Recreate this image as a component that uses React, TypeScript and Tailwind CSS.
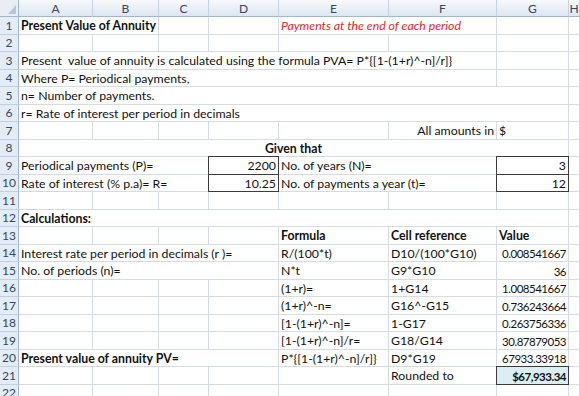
import React from "react";

type Cell = {
  span?: number;
  text?: string;
  align?: "left" | "right" | "center";
  bold?: boolean;
  red?: boolean;
  box?: boolean;
  fill?: boolean;
  num?: boolean;
};

const GRID = "grid grid-cols-[19px_74px_66px_50px_70px_110px_108px_72px_1fr]";
const LETTERS = ["A", "B", "C", "D", "E", "F", "G", "H"];

const e = (): Cell => ({});
const t = (text: string, extra: Partial<Cell> = {}): Cell => ({ text, ...extra });
const n = (text: string): Cell => ({ text, align: "right", num: true });

// every row lists columns A..G; H is added empty
const rows: Cell[][] = [
  [t("Present Value of Annuity", { span: 2, bold: true }), e(), e(), t("Payments at the end of each period", { span: 2, red: true }), e()],
  [e(), e(), e(), e(), e(), e(), e()],
  [t("Present  value of annuity is calculated using the formula PVA= P*{[1-(1+r)^-n]/r]}", { span: 6 }), e()],
  [t("Where P= Periodical payments,", { span: 6 }), e()],
  [t("n= Number of payments.", { span: 7 })],
  [t("r= Rate of interest per period in decimals", { span: 7 })],
  [e(), e(), e(), e(), e(), t("All amounts in", { align: "right" }), t("$")],
  [t("Given that", { span: 7, bold: true, align: "center" })],
  [t("Periodical payments (P)=", { span: 3 }), t("2200", { align: "right", box: true }), t("No. of years (N)=", { span: 2 }), t("3", { align: "right", box: true })],
  [t("Rate of interest (% p.a)= R=", { span: 3 }), t("10.25", { align: "right", box: true }), t("No. of payments a year (t)=", { span: 2 }), t("12", { align: "right", box: true })],
  [e(), e(), e(), e(), e(), e(), e()],
  [t("Calculations:", { span: 7, bold: true })],
  [e(), e(), e(), e(), t("Formula", { bold: true }), t("Cell reference", { bold: true }), t("Value", { bold: true })],
  [t("Interest rate per period in decimals (r )=", { span: 4 }), t("R/(100*t)"), t("D10/(100*G10)"), n("0.008541667")],
  [t("No. of periods (n)=", { span: 4 }), t("N*t"), t("G9*G10"), n("36")],
  [e(), e(), e(), e(), t("(1+r)="), t("1+G14"), n("1.008541667")],
  [e(), e(), e(), e(), t("(1+r)^-n="), t("G16^-G15"), n("0.736243664")],
  [e(), e(), e(), e(), t("[1-(1+r)^-n]="), t("1-G17"), n("0.263756336")],
  [e(), e(), e(), e(), t("[1-(1+r)^-n]/r="), t("G18/G14"), n("30.87879053")],
  [t("Present value of annuity PV=", { span: 4, bold: true }), t("P*{[1-(1+r)^-n]/r]}"), t("D9*G19"), n("67933.33918")],
  [e(), e(), e(), e(), e(), t("Rounded to"), t("$67,933.34", { align: "right", bold: true, box: true, fill: true, num: true })],
  [e(), e(), e(), e(), e(), e(), e()],
];

const spanClass: Record<number, string> = {
  1: "col-span-1",
  2: "col-span-2",
  3: "col-span-3",
  4: "col-span-4",
  5: "col-span-5",
  6: "col-span-6",
  7: "col-span-7",
};

function SheetCell({ cell }: { cell: Cell }) {
  const align =
    cell.align === "right" ? "justify-end" : cell.align === "center" ? "justify-center" : "justify-start";
  return (
    <div
      className={[
        spanClass[cell.span ?? 1],
        "flex items-center overflow-hidden whitespace-pre px-[2px] pt-[2px] border-r border-b",
        align,
        cell.box
          ? "border-[#3c3c3c] shadow-[-1px_0_0_#3c3c3c,0_-1px_0_#3c3c3c,-1px_-1px_0_#3c3c3c]"
          : "border-[#d5dae3]",
        cell.fill ? "bg-[#dbeef4]" : "",
        cell.bold ? "font-bold" : "",
        cell.num ? "text-[11.5px] tracking-[-0.5px]" : "",
        cell.red ? "italic text-[#e3262b]" : "text-[#111]",
      ].join(" ")}
    >
      {cell.text}
    </div>
  );
}

export default function App() {
  return (
    <main className="h-[396px] w-[580px] overflow-hidden bg-white font-['Lato',sans-serif] text-[12.3px] leading-none">
      {/* column headers */}
      <div className={`${GRID} h-[17px]`}>
        <div className="relative border-r border-b border-[#9eb6ce] bg-[#e9eef5]">
          <div className="absolute bottom-[2px] right-[2px] h-0 w-0 border-b-[9px] border-l-[8px] border-b-[#b5c6db] border-l-transparent" />
        </div>
        {LETTERS.map((l) => (
          <div
            key={l}
            className="flex items-center justify-center border-r border-b border-r-[#c5d2e2] border-b-[#9eb6ce] bg-gradient-to-b from-[#f7f9fc] to-[#dde6f1] pt-[1px] text-[12px] text-[#34465f]"
          >
            {l}
          </div>
        ))}
      </div>

      {rows.map((cells, i) => (
        <div key={i} className={`${GRID} h-[17.5px]`}>
          <div className="flex items-center justify-center border-r border-b border-r-[#9eb6ce] border-b-[#c0cfe1] bg-[#e4ecf7] pt-[1px] text-[12px] text-[#34465f]">
            {i + 1}
          </div>
          {cells.map((c, j) => (
            <SheetCell key={j} cell={c} />
          ))}
          <SheetCell cell={{}} />
        </div>
      ))}
    </main>
  );
}
